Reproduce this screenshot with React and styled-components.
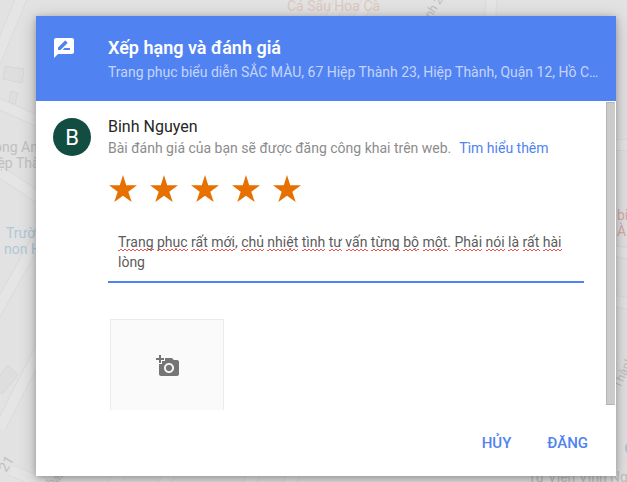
import React, { useState } from 'react';
import styled, { createGlobalStyle } from 'styled-components';
import { MdRateReview, MdAddAPhoto } from 'react-icons/md';

const GlobalStyle = createGlobalStyle`
    * {
        box-sizing:border-box;
    }
    body {
        margin:0;
        font-family:Roboto, "Noto Sans", sans-serif;
        background:#e2e2e2;
    }
`
const Page = styled.main`
    position:relative;
    height:100vh;
    overflow:hidden;
    padding:16px 11px 6px 36px;
`
const MapLayer = styled.svg`
    position:absolute;
    top:0;
    left:0;
    width:100%;
    height:100%;
`
const MapLabel = styled.text`
    font-size:${props=>props.$small?'12px':'14px'};
    fill:${props=>props.$color || '#bfc0c1'};
`
const Dialog = styled.section`
    position:relative;
    display:flex;
    flex-direction:column;
    height:100%;
    background:#fff;
    box-shadow:0 4px 16px rgba(0,0,0,0.25), 0 1px 6px rgba(0,0,0,0.2);
`
const Header = styled.header`
    display:grid;
    grid-template-columns:56px minmax(0, 1fr);
    padding:20px 16px 17px;
    background:#5083f1;
    color:#fff;
`
const Title = styled.h1`
    margin:0;
    font-size:18px;
    font-weight:600;
    line-height:24px;
`
const Place = styled.p`
    margin:0;
    font-size:14px;
    line-height:24px;
    color:#c4d5fb;
    white-space:nowrap;
    overflow:hidden;
    text-overflow:ellipsis;
`
const Body = styled.div`
    display:flex;
    flex:1;
    min-height:0;
    overflow:hidden;
`
const Content = styled.form`
    display:grid;
    grid-template-columns:55px minmax(0, 1fr);
    align-content:start;
    flex:1;
    padding:17px 22px 0 17px;
`
const Avatar = styled.div`
    display:flex;
    align-items:center;
    justify-content:center;
    width:38px;
    height:38px;
    border-radius:50%;
    background:#124d41;
    color:#fff;
    font-size:22px;
`
const UserName = styled.div`
    font-size:16px;
    line-height:18px;
    color:#262626;
`
const Notice = styled.p`
    margin:0;
    font-size:14px;
    line-height:24px;
    color:#8c8c8c;
`
const MoreLink = styled.a`
    margin-left:8px;
    color:#5083f1;
    text-decoration:none;
`
const Stars = styled.div`
    display:flex;
    gap:13px;
    margin-top:15px;
    padding-left:1px;
`
const Star = styled.input`
    appearance:none;
    width:28px;
    height:27px;
    margin:0;
    cursor:pointer;
    background:${props=>props.$on?'#e67000':'#dadada'};
    clip-path:polygon(50% 0%, 61.5% 38.2%, 100% 38.2%, 69% 61.8%, 81% 100%, 50% 76.4%, 19% 100%, 31% 61.8%, 0% 38.2%, 38.5% 38.2%);
`
const ReviewField = styled.div`
    display:grid;
    margin-top:20px;
    border-bottom:2px solid #5083f1;
    font-size:14px;
    line-height:20px;

    > * {
        grid-area:1 / 1;
        padding:10px 10px 9px;
    }
`
const ReviewText = styled.textarea`
    display:block;
    width:100%;
    border:0;
    outline:0;
    resize:none;
    overflow:hidden;
    background:transparent;
    color:#5c5c5c;
    font:inherit;
`
const SpellLayer = styled.div`
    color:transparent;
    white-space:pre-wrap;
    user-select:none;
`
const Misspelled = styled.span`
    padding-bottom:1px;
    background-image:
        linear-gradient(90deg, #f05050 50%, transparent 50%),
        linear-gradient(90deg, transparent 50%, #f05050 50%);
    background-size:4px 1px;
    background-repeat:repeat-x;
    background-position:left bottom, left calc(100% - 1px);
`
const PhotoButton = styled.button`
    display:flex;
    align-items:center;
    justify-content:center;
    width:114px;
    height:94px;
    margin:36px 0 0 2px;
    padding:0 0 0 2px;
    border:1px solid #ebebeb;
    background:#fafafa;
    color:#757575;
    cursor:pointer;
`
const ScrollTrack = styled.div`
    width:10px;
    padding:1px 1px 5px 0;
`
const ScrollThumb = styled.div`
    height:100%;
    border:1px solid #b4b4b4;
    border-right-color:#cbcbcb;
    background:#cbcbcb;
`
const Footer = styled.footer`
    display:flex;
    justify-content:flex-end;
    gap:20px;
    padding:15px 20px;
`
const TextButton = styled.button`
    height:36px;
    padding:0 8px;
    border:0;
    background:none;
    color:#5083f1;
    font-family:inherit;
    font-size:15px;
    font-weight:500;
    cursor:pointer;
`

const KNOWN_WORDS = ['lòng'];

const markSpelling = (text) => text.split(/([\s.,]+)/).map((part, i) => (
    /^[\s.,]*$/.test(part) || KNOWN_WORDS.includes(part)
        ? part
        : <Misspelled key={i}>{part}</Misspelled>
));

const roads = 'M24 -8L-8 70M-10 100L40 122M-10 165L50 205M-8 320L45 225M0 428L50 330M10 470L50 486M110 490L125 465M160 490L175 465M245 490L260 465M285 490L300 465M330 20L345 -8M358 20L372 -8M490 20L492 -8M610 145H630M610 250L630 254M610 300L630 304';

const MapBackground = () => (
    <MapLayer aria-hidden="true">
        <path d={roads} fill="none" stroke="#dbdbdb" strokeWidth="12" />
        <path d={roads} fill="none" stroke="#e5e5e5" strokeWidth="10" />
        <g fill="#dedede" stroke="#d7d7d7">
            <path d="M5 66L24 69L22 83L3 79ZM11 91L18 93L15 104L9 102ZM8 365L18 375L2 394L-6 384Z" />
        </g>
        <MapLabel x="287" y="11" $color="#dfc8be">Cá Sấu Hoa Cà</MapLabel>
        <MapLabel x="-6" y="152">ong An</MapLabel>
        <MapLabel x="-6" y="168">iệp Thành</MapLabel>
        <MapLabel x="6" y="238" $color="#adc9d8">Trường</MapLabel>
        <MapLabel x="4" y="254" $color="#adc9d8">non Hoa</MapLabel>
        <MapLabel x="617" y="220" $color="#d9a9a6">bi</MapLabel>
        <MapLabel x="617" y="236" $color="#d9a9a6">À</MapLabel>
        <MapLabel x="528" y="482">Tư Viện Vĩnh Nguyên</MapLabel>
        <MapLabel transform="translate(6 473) rotate(-58)">21</MapLabel>
        <MapLabel $small transform="translate(431 19) rotate(-58)">nh 23</MapLabel>
        <MapLabel $small transform="translate(46 492) rotate(-40)">Thành</MapLabel>
        <MapLabel $small transform="translate(620 389) rotate(-65)">Thành</MapLabel>
        <circle cx="632" cy="448" r="7" fill="#a9c6d6" />
    </MapLayer>
);

const App = () => {
    const [rating, setRating] = useState(5);
    const [review, setReview] = useState('Trang phục rất mới, chủ nhiệt tình tư vấn từng bộ một. Phải nói là rất hài lòng');

    return (
        <Page>
            <GlobalStyle />
            <MapBackground />
            <Dialog role="dialog" aria-labelledby="dialog-title">
                <Header>
                    <MdRateReview size={24} />
                    <div>
                        <Title id="dialog-title">Xếp hạng và đánh giá</Title>
                        <Place>Trang phục biểu diễn SẮC MÀU, 67 Hiệp Thành 23, Hiệp Thành, Quận 12, Hồ Chí Minh</Place>
                    </div>
                </Header>
                <Body>
                    <Content id="review-form" onSubmit={e=>e.preventDefault()}>
                        <Avatar>B</Avatar>
                        <div>
                            <UserName>Binh Nguyen</UserName>
                            <Notice>
                                Bài đánh giá của bạn sẽ được đăng công khai trên web.
                                <MoreLink href="#more">Tìm hiểu thêm</MoreLink>
                            </Notice>
                            <Stars role="radiogroup" aria-label="Xếp hạng">
                                {[1, 2, 3, 4, 5].map(n => (
                                    <Star
                                        key={n}
                                        type="radio"
                                        name="rating"
                                        aria-label={`${n} sao`}
                                        checked={rating === n}
                                        onChange={() => setRating(n)}
                                        $on={n <= rating}
                                    />
                                ))}
                            </Stars>
                            <ReviewField>
                                <SpellLayer aria-hidden="true">{markSpelling(review)}</SpellLayer>
                                <ReviewText
                                    rows={2}
                                    spellCheck={false}
                                    aria-label="Bài đánh giá"
                                    value={review}
                                    onChange={e=>setReview(e.target.value)}
                                />
                            </ReviewField>
                            <PhotoButton type="button" aria-label="Thêm ảnh">
                                <MdAddAPhoto size={24} />
                            </PhotoButton>
                        </div>
                    </Content>
                    <ScrollTrack>
                        <ScrollThumb />
                    </ScrollTrack>
                </Body>
                <Footer>
                    <TextButton type="button">HỦY</TextButton>
                    <TextButton type="submit" form="review-form">ĐĂNG</TextButton>
                </Footer>
            </Dialog>
        </Page>
    );
}

export default App;
